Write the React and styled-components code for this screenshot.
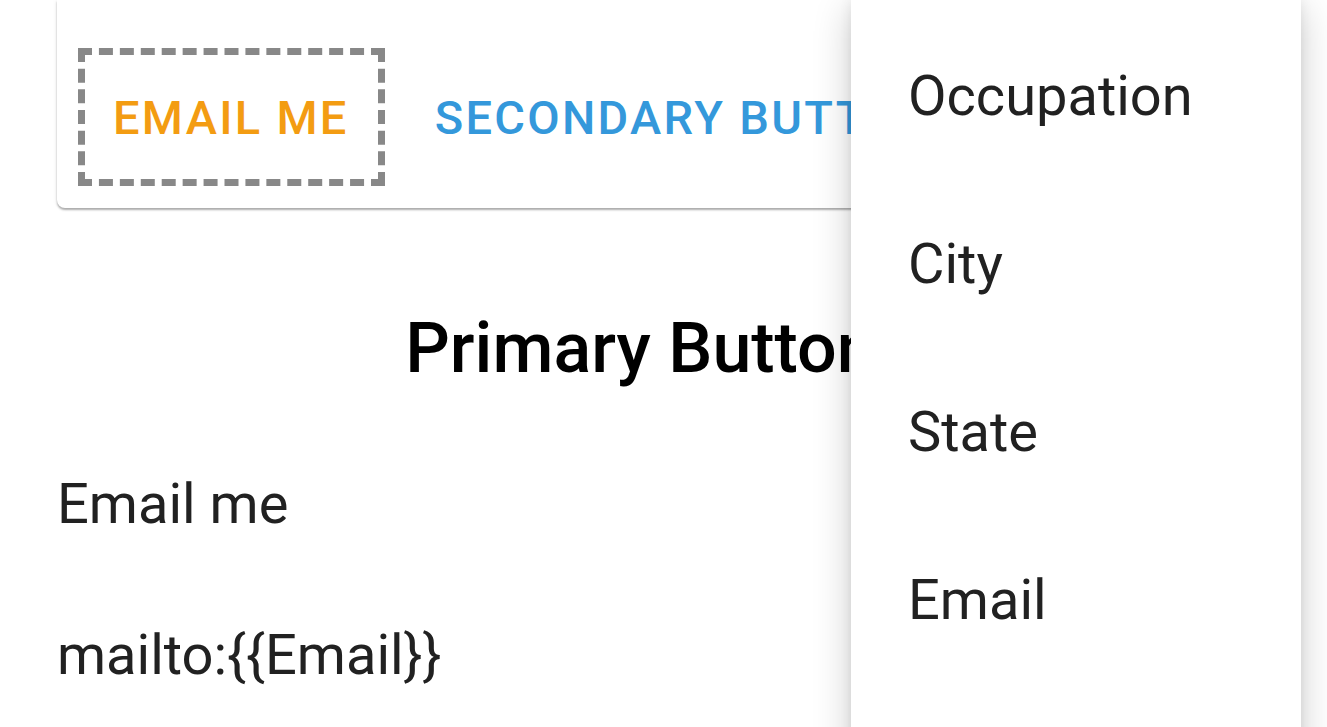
import React from "react"
import styled, { createGlobalStyle } from "styled-components"

//Styles
const GlobalStyle = createGlobalStyle`
  html, body {
    margin: 0;
    padding: 0;
    background: #ffffff;
    font-family: Roboto, "Noto Sans", Arial, sans-serif;
    overflow: hidden;
  }
`
const Page = styled.div`
  position: relative;
  width: 1327px;
  height: 727px;
  overflow: hidden;
  background: #ffffff;
`
const Content = styled.div`
  display: flex;
  flex-flow: column;
  padding: 0 57px;
`
const Card = styled.div`
  display: flex;
  flex-flow: row nowrap;
  align-items: center;
  padding: 48px 21px 22px;
  background: #ffffff;
  border-radius: 0 0 8px 8px;
  box-shadow: 0 2px 2px rgba(0, 0, 0, 0.3), 0 0 5px rgba(0, 0, 0, 0.08);
`
const TextButton = styled.button`
  display: flex;
  align-items: center;
  flex-shrink: 0;
  height: 138px;
  box-sizing: border-box;
  padding: 0 29px 0 28px;
  margin-right: 15px;
  background: transparent;
  border: ${props => (props.outlined ? "7px dashed #888888" : "7px solid transparent")};
  font-family: Roboto, "Noto Sans", Arial, sans-serif;
  font-size: 47px;
  font-weight: 500;
  letter-spacing: 2.3px;
  text-transform: uppercase;
  white-space: nowrap;
  color: ${props => props.color};
`
const Heading = styled.h2`
  margin: 98px 0 0;
  padding-right: 46px;
  font-size: 70px;
  font-weight: 500;
  line-height: 84px;
  text-align: center;
  color: #000000;
`
const BodyText = styled.p`
  margin: ${props => props.gap}px 0 0;
  font-size: 56px;
  font-weight: 400;
  line-height: 84px;
  color: #212121;
`
const Menu = styled.ul`
  position: absolute;
  top: 0;
  left: 851px;
  width: 450px;
  height: 760px;
  margin: 0;
  padding: 12px 0 0;
  list-style: none;
  background: #ffffff;
  box-shadow: 0 8px 36px rgba(0, 0, 0, 0.2), 0 0 12px rgba(0, 0, 0, 0.08);
`
const MenuItem = styled.li`
  height: 168px;
  padding-left: 57px;
  font-size: 56px;
  line-height: 168px;
  color: #212121;
`

const fields = ["Occupation", "City", "State", "Email"]

const App = () => (
  <Page>
    <GlobalStyle />
    <Content>
      <Card>
        <TextButton outlined color="#f39c12">
          Email me
        </TextButton>
        <TextButton color="#3498db">Secondary button</TextButton>
      </Card>
      <Heading>Primary Button</Heading>
      <BodyText gap={72}>Email me</BodyText>
      <BodyText gap={67}>mailto:{"{{Email}}"}</BodyText>
    </Content>
    <Menu>
      {fields.map(f => (
        <MenuItem key={f}>{f}</MenuItem>
      ))}
    </Menu>
  </Page>
)

export default App
